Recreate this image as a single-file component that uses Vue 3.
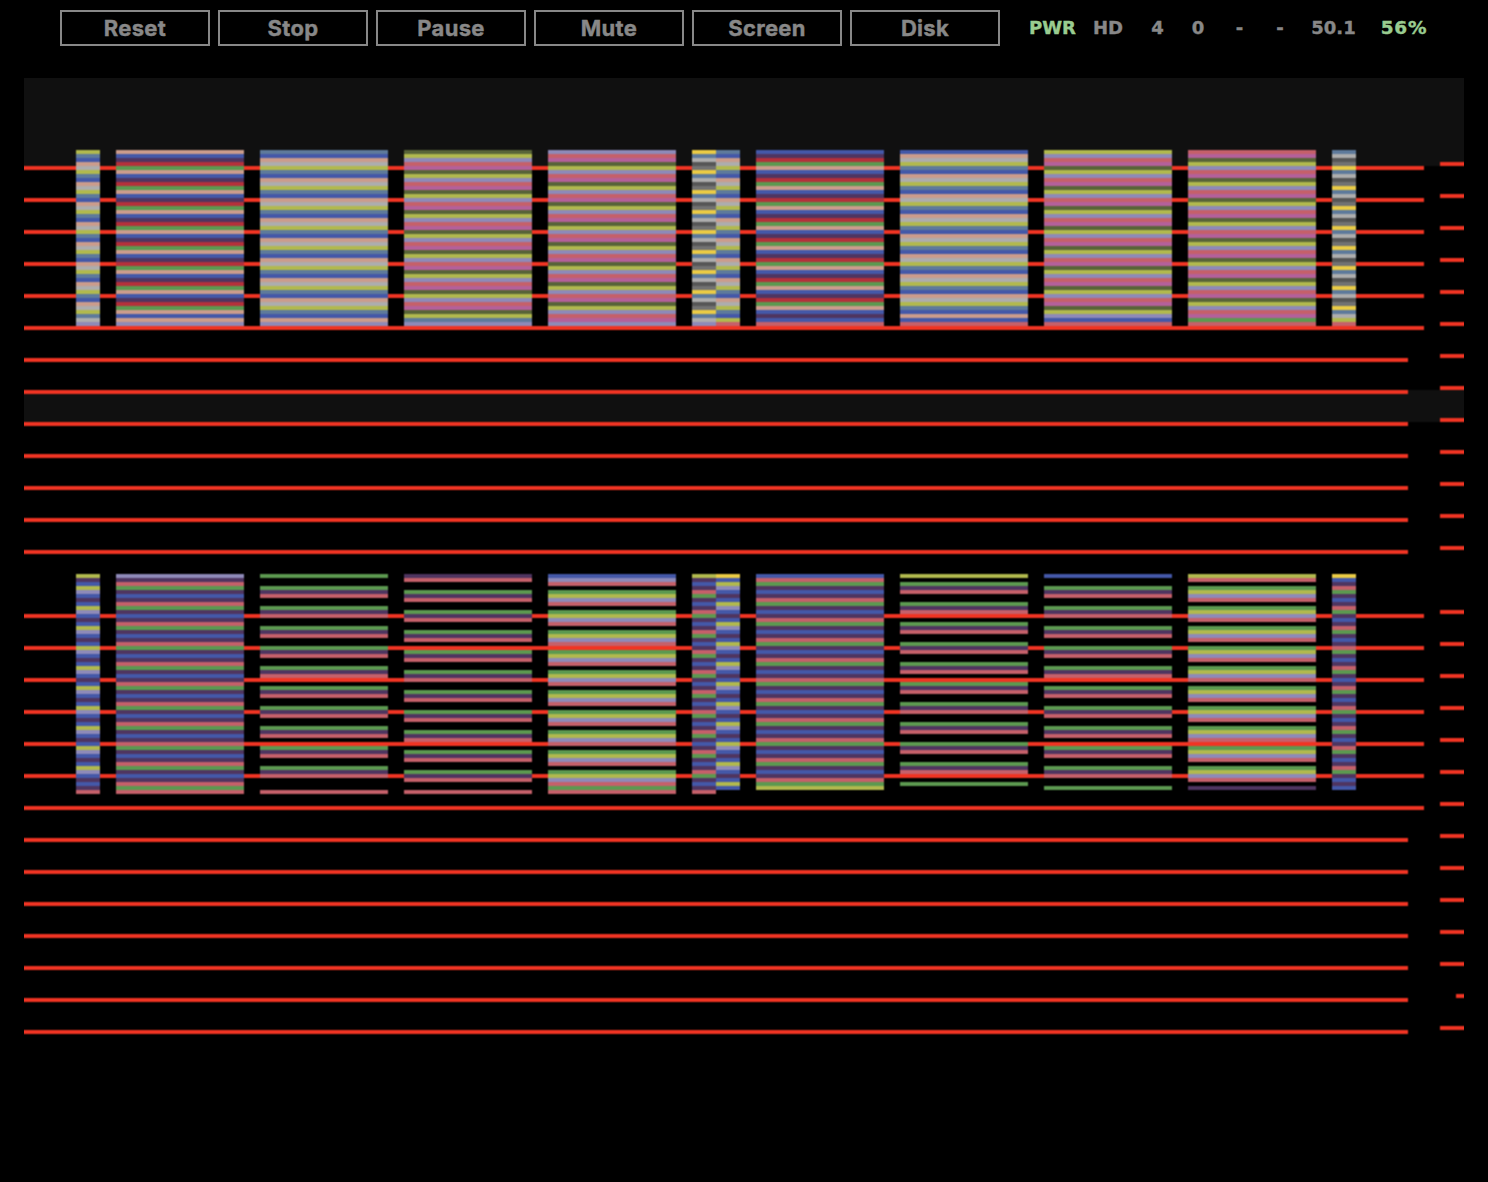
<script setup>
import { onMounted, ref } from 'vue'

const buttons = ['Reset', 'Stop', 'Pause', 'Mute', 'Screen', 'Disk']
const status = [
  { text: 'PWR', width: 57, on: true },
  { text: 'HD', width: 54 },
  { text: '4', width: 45 },
  { text: '0', width: 36 },
  { text: '-', width: 47 },
  { text: '-', width: 34 },
  { text: '50.1', width: 73 },
  { text: '56%', width: 68, on: true, load: true },
]

const palette = {
  Y: '#b1b94e', T: '#5e7a9b', B: '#4458a8', P: '#cb9c8c', G: '#adadad',
  R: '#b5303b', N: '#5c9950', V: '#4f3560', O: '#586438', L: '#8e8ab8',
  S: '#c5606a', M: '#b4609a', W: '#eacb45', D: '#565656', E: '#727272',
}

// Each column: [left, width, colour codes from top to bottom], in screen cells.
const upper = [
  [13, 6, 'YTBPG'.repeat(8) + 'YTGL'],
  [23, 32, 'PBVRN'.repeat(8) + 'PBPL'],
  [59, 32, 'TBPGY'.repeat(8) + 'TBPL'],
  [95, 32, 'OYLSM'.repeat(8) + 'OYTL'],
  [131, 32, 'LSMOY'.repeat(8) + 'LSML'],
  [167, 6, 'WTGDE'.repeat(8) + 'WTGL'],
  [173, 6, 'TBPGY'.repeat(8) + 'TBYS'],
  [183, 32, 'BVRNP'.repeat(8) + 'BVBS'],
  [219, 32, 'BPGYT'.repeat(8) + 'BPBS'],
  [255, 32, 'YLSMO'.repeat(8) + 'YLBS'],
  [291, 32, 'SMOYL'.repeat(8) + 'SMNS'],
  [327, 6, 'TGDEW'.repeat(8) + 'TGYS'],
]
const lower = [
  [13, 6, 'YVB' + 'YLBVB'.repeat(10) + 'VS'],
  [23, 32, 'LVS' + 'NVBVS'.repeat(10) + 'NS'],
  [59, 32, 'N..' + 'NVS..'.repeat(10) + '.S'],
  [95, 32, 'VS..' + 'NVS..'.repeat(10) + 'S'],
  [131, 32, 'BLS.' + 'NYLS.'.repeat(9) + 'NYLSNS'],
  [167, 6, 'YVBV' + 'SNVBV'.repeat(10) + 'S'],
  [173, 6, 'WB' + 'YLBVB'.repeat(10) + 'YB'],
  [183, 32, 'B' + 'SNVBV'.repeat(10) + 'SNY'],
  [219, 32, 'Y.' + 'NVS..'.repeat(10) + 'N'],
  [255, 32, 'B..' + 'NVS..'.repeat(10) + 'N'],
  [291, 32, 'YS.' + 'NYLS.'.repeat(10) + 'V'],
  [327, 6, 'WBV' + 'SNVBV'.repeat(10) + 'B'],
]

const screen = ref(null)

onMounted(() => {
  const ctx = screen.value.getContext('2d')
  const cell = (x, y, w, h, color) => {
    ctx.fillStyle = color
    ctx.fillRect(x * 2, y * 2, w * 2, h * 2)
  }
  cell(0, 0, 360, 276, '#000')
  cell(0, 0, 360, 22, '#101010')
  cell(0, 78, 360, 8, '#101010')
  for (let k = 0; k < 28; k++) {
    if (k === 13) continue
    const long = k < 6 || (k > 13 && k < 21)
    cell(0, 22 + k * 8, long ? 350 : 346, 1, '#f03423')
    const short = k === 26
    cell(short ? 358 : 354, 21 + k * 8, short ? 2 : 6, 1, '#f03423')
  }
  const drawColumns = (columns, top) => {
    for (const [x, w, rows] of columns) {
      ;[...rows].forEach((code, i) => {
        if (code !== '.') cell(x, top + i, w, 1, palette[code])
      })
    }
  }
  drawColumns(upper, 18)
  drawColumns(lower, 124)
})
</script>

<template>
  <div class="emulator">
    <header class="toolbar">
      <div class="buttons">
        <button v-for="label in buttons" :key="label" type="button">{{ label }}</button>
      </div>
      <div class="status">
        <span
          v-for="(item, i) in status"
          :key="i"
          :class="{ on: item.on, load: item.load }"
          :style="{ width: item.width + 'px' }"
        >{{ item.text }}</span>
      </div>
    </header>
    <canvas ref="screen" class="screen" width="720" height="552"></canvas>
  </div>
</template>

<style>
html,
body {
  margin: 0;
  background: #000;
}
</style>

<style scoped>
.emulator {
  width: 1488px;
  height: 1182px;
  overflow: hidden;
  background: #000;
}
.toolbar {
  display: flex;
  height: 68px;
  padding: 10px 0 0 60px;
}
.buttons {
  display: flex;
  gap: 8px;
}
button {
  box-sizing: border-box;
  width: 150px;
  height: 36px;
  padding: 0;
  border: 2px solid #888;
  border-radius: 0;
  background: #000;
  color: #888;
  font: 700 22px/32px Inter, sans-serif;
  letter-spacing: 0.3px;
  -webkit-text-stroke: 0.4px currentColor;
}
.status {
  display: flex;
  margin-left: 24px;
  color: #888;
  font: 700 18px/36px "DejaVu Sans", Verdana, sans-serif;
  -webkit-text-stroke: 0.4px currentColor;
}
.status span {
  text-align: center;
  white-space: nowrap;
}
.status .on {
  color: #99cc90;
}
.status .load {
  font-size: 18.5px;
  letter-spacing: 0.8px;
}
.screen {
  display: block;
  width: 1440px;
  height: 1104px;
  margin-left: 24px;
}
</style>
